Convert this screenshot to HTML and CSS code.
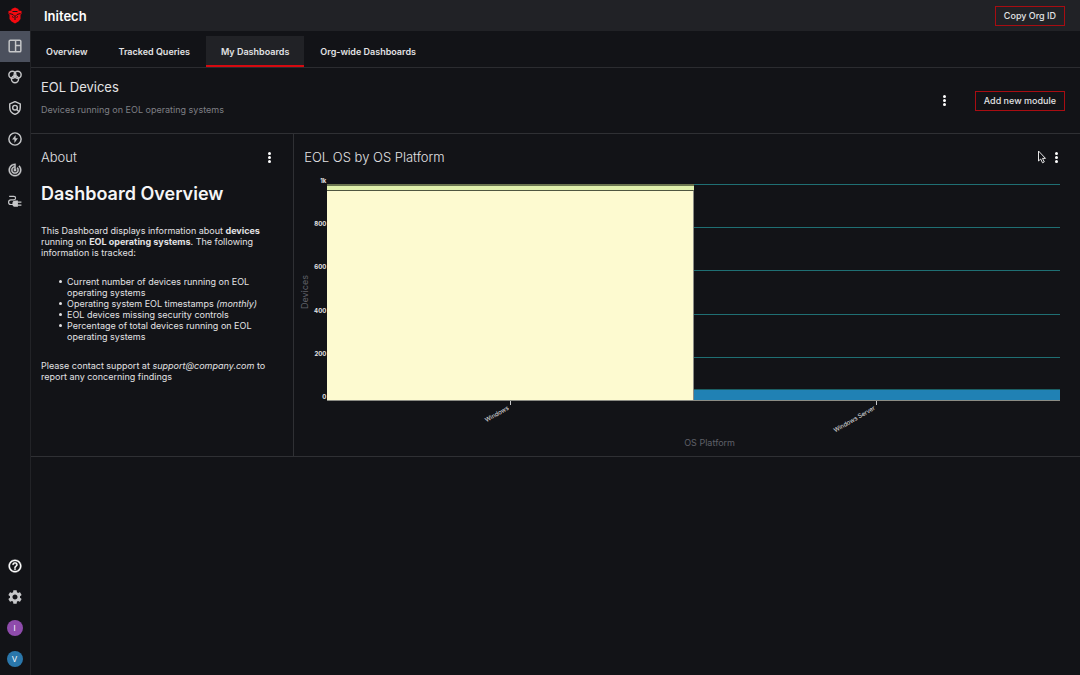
FILE: index.html
```
<!DOCTYPE html>
<html lang="en">
<head>
    <meta charset="UTF-8">
    <meta name="viewport" content="width=device-width, initial-scale=1.0">
    <title>Initech - EOL Devices</title>
    <link rel="stylesheet" href="styles.css">
</head>
<body>
    <nav class="sidebar" aria-label="Main">
        <a class="side-item" href="#" aria-label="Home">
            <svg class="logo" viewBox="0 0 28 32"><path fill="#f5090f" d="M14 0l7 3v3l6 1v6l-2 1v9l-4 5-7 4-7-4-4-5v-9l-2-1V7l6-1V3z"/><path fill="none" stroke="#121317" stroke-width="2" d="M3 12l7 2 4 4 4-4 7-2M14 18v7M8 18l3 2M20 18l-3 2M9 8h10"/></svg>
        </a>
        <a class="side-item active" href="#" aria-label="Dashboards">
            <svg viewBox="0 0 24 24" fill="none" stroke="currentColor" stroke-width="2.500"><rect x="2" y="2" width="20" height="20" rx="2"/><path d="M13 2v20M13 11h9"/></svg>
        </a>
        <a class="side-item" href="#" aria-label="Queries">
            <svg viewBox="0 0 24 24" fill="none" stroke="currentColor" stroke-width="2.500"><circle cx="7.500" cy="8" r="6"/><circle cx="16.500" cy="8" r="6"/><circle cx="12" cy="16" r="6"/></svg>
        </a>
        <a class="side-item" href="#" aria-label="Policies">
            <svg viewBox="0 0 24 24" fill="none" stroke="currentColor" stroke-width="2.500"><path d="M12 1l9 4v6c0 5.500-3.800 10.200-9 12-5.200-1.800-9-6.500-9-12V5z"/><circle cx="12" cy="11.500" r="4"/><path d="M15 14.500l4 4"/></svg>
        </a>
        <a class="side-item" href="#" aria-label="Actions">
            <svg viewBox="0 0 24 24" fill="none" stroke="currentColor" stroke-width="2.500"><circle cx="12" cy="12" r="10.500"/><path fill="currentColor" stroke="none" d="M13 5l-6 8h4v6l6-8.500h-4z"/></svg>
        </a>
        <a class="side-item" href="#" aria-label="Tracking">
            <svg viewBox="1 1 22 22" fill="currentColor"><path d="M19.070 4.930l-1.410 1.410C19.100 7.790 20 9.790 20 12c0 4.420-3.580 8-8 8s-8-3.580-8-8c0-4.080 3.050-7.440 7-7.930v2.020C8.160 6.570 6 9.030 6 12c0 3.310 2.690 6 6 6s6-2.690 6-6c0-1.660-.67-3.160-1.760-4.240l-1.410 1.410C15.550 9.900 16 10.900 16 12c0 2.210-1.790 4-4 4s-4-1.790-4-4c0-1.860 1.280-3.410 3-3.860v2.140c-.6.350-1 .98-1 1.720 0 1.100.9 2 2 2s2-.9 2-2c0-.74-.4-1.380-1-1.720V2h-1C6.480 2 2 6.480 2 12s4.480 10 10 10 10-4.480 10-10c0-2.760-1.120-5.260-2.930-7.070z" stroke="currentColor" stroke-width=".5"/></svg>
        </a>
        <a class="side-item" href="#" aria-label="Integrations">
            <svg viewBox="0 0 24 24" fill="none" stroke="currentColor" stroke-width="2"><path d="M2 4h8a3 3 0 0 1 0 6H5a4 4 0 0 0 0 8h5"/><path fill="currentColor" stroke="none" d="M17 11v11h-4a5.500 5.500 0 0 1 0-11z"/><path d="M17 14h6M17 19h6"/></svg>
        </a>
        <span class="spacer"></span>
        <a class="side-item help" href="#" aria-label="Help">
            <svg viewBox="1 1 22 22" fill="currentColor"><path d="M11 18h2v-2h-2v2zm1-16C6.480 2 2 6.480 2 12s4.480 10 10 10 10-4.480 10-10S17.520 2 12 2zm0 18c-4.410 0-8-3.590-8-8s3.590-8 8-8 8 3.590 8 8-3.590 8-8 8zm0-14c-2.210 0-4 1.790-4 4h2c0-1.100.9-2 2-2s2 .9 2 2c0 2-3 1.750-3 5h2c0-2.250 3-2.500 3-5 0-2.210-1.790-4-4-4z" stroke="currentColor" stroke-width=".6"/></svg>
        </a>
        <a class="side-item" href="#" aria-label="Settings">
            <svg viewBox="2 2 20 20" fill="currentColor"><path d="M19.140 12.940c.04-.3.060-.61.060-.94 0-.32-.02-.64-.07-.94l2.030-1.580c.18-.14.230-.41.120-.61l-1.920-3.320c-.12-.22-.37-.29-.59-.22l-2.390.96c-.5-.38-1.030-.7-1.620-.94l-.36-2.540c-.04-.24-.24-.41-.48-.41h-3.840c-.24 0-.43.170-.47.410l-.36 2.540c-.59.240-1.130.570-1.620.940l-2.390-.96c-.22-.08-.47 0-.59.220L2.740 8.870c-.12.210-.08.470.120.610l2.030 1.580c-.05.300-.09.630-.09.940s.02.640.070.940l-2.030 1.580c-.18.140-.23.410-.12.610l1.920 3.320c.12.220.370.290.590.220l2.390-.96c.5.380 1.030.700 1.620.940l.36 2.540c.05.240.240.410.480.410h3.840c.24 0 .44-.17.470-.41l.36-2.540c.59-.24 1.130-.56 1.620-.94l2.390.96c.22.080.470 0 .59-.22l1.920-3.320c.12-.22.070-.47-.12-.61l-2.010-1.580zM12 15.600c-1.980 0-3.600-1.620-3.600-3.600s1.620-3.600 3.600-3.600 3.600 1.620 3.600 3.600-1.620 3.600-3.600 3.600z"/></svg>
        </a>
        <a class="side-item" href="#"><span class="avatar org">I</span></a>
        <a class="side-item" href="#"><span class="avatar user">V</span></a>
    </nav>
    <div class="page">
        <header class="topbar">
            <h1>Initech</h1>
            <button class="btn" type="button">Copy Org ID</button>
        </header>
        <nav class="tabs" aria-label="Dashboards">
            <a href="#">Overview</a>
            <a href="#">Tracked Queries</a>
            <a class="active" href="#">My Dashboards</a>
            <a href="#">Org-wide Dashboards</a>
        </nav>
        <main>
            <section class="dash-header">
                <div>
                    <h2>EOL Devices</h2>
                    <p>Devices running on EOL operating systems</p>
                </div>
                <div class="dash-actions">
                    <button class="kebab" type="button" aria-label="Dashboard menu"><i></i><i></i><i></i></button>
                    <button class="btn" type="button">Add new module</button>
                </div>
            </section>
            <div class="modules">
                <section class="module">
                    <div class="module-head">
                        <h3>About</h3>
                        <button class="kebab" type="button" aria-label="About menu"><i></i><i></i><i></i></button>
                    </div>
                    <div class="markdown">
                        <h1>Dashboard Overview</h1>
                        <p>This Dashboard displays information about <strong>devices</strong> running on <strong>EOL operating systems</strong>. The following information is tracked:</p>
                        <ul>
                            <li>Current number of devices running on EOL operating systems</li>
                            <li>Operating system EOL timestamps <em>(monthly)</em></li>
                            <li>EOL devices missing security controls</li>
                            <li>Percentage of total devices running on EOL operating systems</li>
                        </ul>
                        <p>Please contact support at <em>support@company.com</em> to report any concerning findings</p>
                    </div>
                </section>
                <section class="module chart-module">
                    <div class="module-head">
                        <h3>EOL OS by OS Platform</h3>
                        <button class="kebab" type="button" aria-label="Chart menu"><i></i><i></i><i></i></button>
                        <svg class="cursor" viewBox="0 0 10 14"><path d="M1.500 1v10l2.200-2 1.800 3.800 1.800-.9-1.800-3.500h3z" fill="#121317" stroke="#e6e6e6"/></svg>
                    </div>
                    <div class="chart">
                        <div class="y-title">Devices</div>
                        <div class="y-ticks">
                            <span>1k</span>
                            <span>800</span>
                            <span>600</span>
                            <span>400</span>
                            <span>200</span>
                            <span>0</span>
                        </div>
                        <div class="plot">
                            <div class="bar">
                                <div class="seg green" style="height: 2%"></div>
                                <div class="seg cream" style="height: 97%"></div>
                            </div>
                            <div class="bar">
                                <div class="seg blue" style="height: 5%"></div>
                            </div>
                        </div>
                        <div class="x-ticks">
                            <div class="x-tick"><span>Windows</span></div>
                            <div class="x-tick"><span>Windows Server</span></div>
                        </div>
                        <div class="x-title">OS Platform</div>
                    </div>
                </section>
            </div>
        </main>
    </div>
</body>
</html>
```
FILE: styles.css
```
* {
    box-sizing: border-box;
}
body {
    margin: 0;
    display: flex;
    min-height: 100vh;
    background-color: #121317;
    color: #e2e2e4;
    font-family: Inter, sans-serif;
    font-size: 9px;
    line-height: 11px;
}
h1, h2, h3, p {
    margin: 0;
}
a {
    color: inherit;
    text-decoration: none;
}
button {
    font: inherit;
    color: inherit;
    background: none;
    border: none;
    cursor: pointer;
}

/* sidebar */
.sidebar {
    display: flex;
    flex-direction: column;
    flex: none;
    width: 31px;
    border-right: 1px solid #222327;
}
.side-item {
    display: flex;
    align-items: center;
    justify-content: center;
    height: 31px;
    padding-bottom: 1px;
    color: #c6c7c9;
}
.side-item.active {
    background-color: #4b505d;
}
.side-item.help {
    color: #fff;
}
.side-item svg {
    width: 14px;
    height: 14px;
}
.side-item .logo {
    height: 17px;
}
.spacer {
    flex: 1;
}
.avatar {
    width: 16px;
    height: 16px;
    margin-right: 1px;
    border-radius: 50%;
    color: #fff;
    font-size: 8px;
    line-height: 16px;
    text-align: center;
}
.avatar.org {
    background-color: #8e4bab;
}
.avatar.user {
    background-color: #2a77ab;
}

/* top */
.page {
    flex: 1;
    min-width: 0;
}
.topbar {
    display: flex;
    align-items: center;
    justify-content: space-between;
    height: 31px;
    padding: 0 15px 0 13px;
    background-color: #212226;
}
.topbar h1 {
    font-size: 13px;
    font-weight: 600;
    line-height: 16px;
    color: #fff;
}
.btn {
    height: 20px;
    padding: 0 8px;
    border: 1px solid #a80d12;
    font-weight: 500;
    line-height: 18px;
}
.tabs {
    display: flex;
    align-items: flex-end;
    gap: 1px;
    height: 37px;
    border-bottom: 1px solid #2b2c30;
}
.tabs a {
    height: 31px;
    padding: 10px 15px 0;
    border-bottom: 2px solid transparent;
    font-weight: 600;
}
.tabs .active {
    background-color: #212226;
    border-color: #d60a10;
}
.dash-header {
    display: flex;
    align-items: center;
    justify-content: space-between;
    height: 66px;
    padding: 0 15px 0 10px;
    border-bottom: 1px solid #2f3034;
}
.dash-header h2 {
    margin-bottom: 9px;
    font-size: 13px;
    font-weight: 400;
    line-height: 16px;
}
.dash-header p {
    margin-bottom: 8px;
    color: #7e7f84;
}
.dash-actions {
    display: flex;
    align-items: center;
    gap: 24px;
}
.kebab {
    display: flex;
    flex-direction: column;
    align-items: center;
    gap: 1px;
    width: 13px;
    padding: 2px 0;
}
.kebab i {
    width: 3px;
    height: 3px;
    border-radius: 50%;
    background-color: #fff;
}

/* modules */
.modules {
    display: grid;
    grid-template-columns: 1fr 3fr;
    min-height: 323px;
    border-bottom: 1px solid #2f3034;
}
.chart-module {
    border-left: 1px solid #2f3034;
}
.module-head {
    position: relative;
    display: flex;
    align-items: center;
    justify-content: space-between;
    height: 46px;
    padding: 0 17px 0 10px;
}
.module-head h3 {
    font-size: 13px;
    font-weight: 300;
    line-height: 16px;
}
.cursor {
    position: absolute;
    right: 33px;
    top: 16px;
    width: 10px;
    height: 14px;
}
.markdown {
    padding: 2px 20px 0 10px;
}
.markdown h1 {
    margin-bottom: 19px;
    font-size: 18px;
    font-weight: 600;
    line-height: 24px;
    color: #f5f5f6;
}
.markdown ul {
    margin: 18px 0;
    padding-left: 26px;
    list-style: none;
}
.markdown li {
    position: relative;
}
.markdown li::before {
    content: "";
    position: absolute;
    left: -8px;
    top: 4px;
    width: 3px;
    height: 3px;
    border-radius: 50%;
    background-color: #e2e2e4;
}

/* chart */
.chart {
    display: grid;
    grid-template-columns: 9px 18px 1fr;
    grid-template-rows: 217px 36px 12px;
    margin-top: 4px;
    padding: 0 20px 0 6px;
}
.y-title {
    writing-mode: vertical-rl;
    transform: rotate(180deg);
    text-align: center;
    line-height: 9px;
    color: #5f6068;
}
.y-ticks {
    display: flex;
    flex-direction: column;
    justify-content: space-between;
    margin: -7px 1px 0 0;
    font-size: 6px;
    font-weight: 700;
    line-height: 8px;
    text-align: right;
}
.plot {
    display: flex;
    border-bottom: 1px solid #8b8c84;
    background: repeating-linear-gradient(#1f6f73 0 1px, transparent 1px 20%);
}
.bar {
    display: flex;
    flex-direction: column;
    justify-content: flex-end;
    flex: 1;
}
.seg {
    border-top: 1px solid #4f5540;
}
.seg.green {
    background-color: #e0f0ac;
    border-top: 2px solid #6b7550;
    box-sizing: content-box;
}
.seg.cream {
    background-color: #fdfad0;
    border-right: 1px solid #8b8c84;
}
.seg.blue {
    background-color: #2081b4;
    border-color: #1b5f64;
}
.x-ticks {
    grid-column: 3;
    display: flex;
}
.x-tick {
    position: relative;
    flex: 1;
}
.x-tick::before {
    content: "";
    display: block;
    width: 1px;
    height: 4px;
    margin: 0 auto;
    background-color: #c6c7c9;
}
.x-tick span {
    position: absolute;
    right: calc(50% + 4px);
    top: 3px;
    font-size: 6px;
    line-height: 8px;
    white-space: nowrap;
    transform: rotate(-30deg);
    transform-origin: top right;
}
.x-title {
    grid-column: 3;
    padding-left: 32px;
    text-align: center;
    color: #5f6068;
}
```
